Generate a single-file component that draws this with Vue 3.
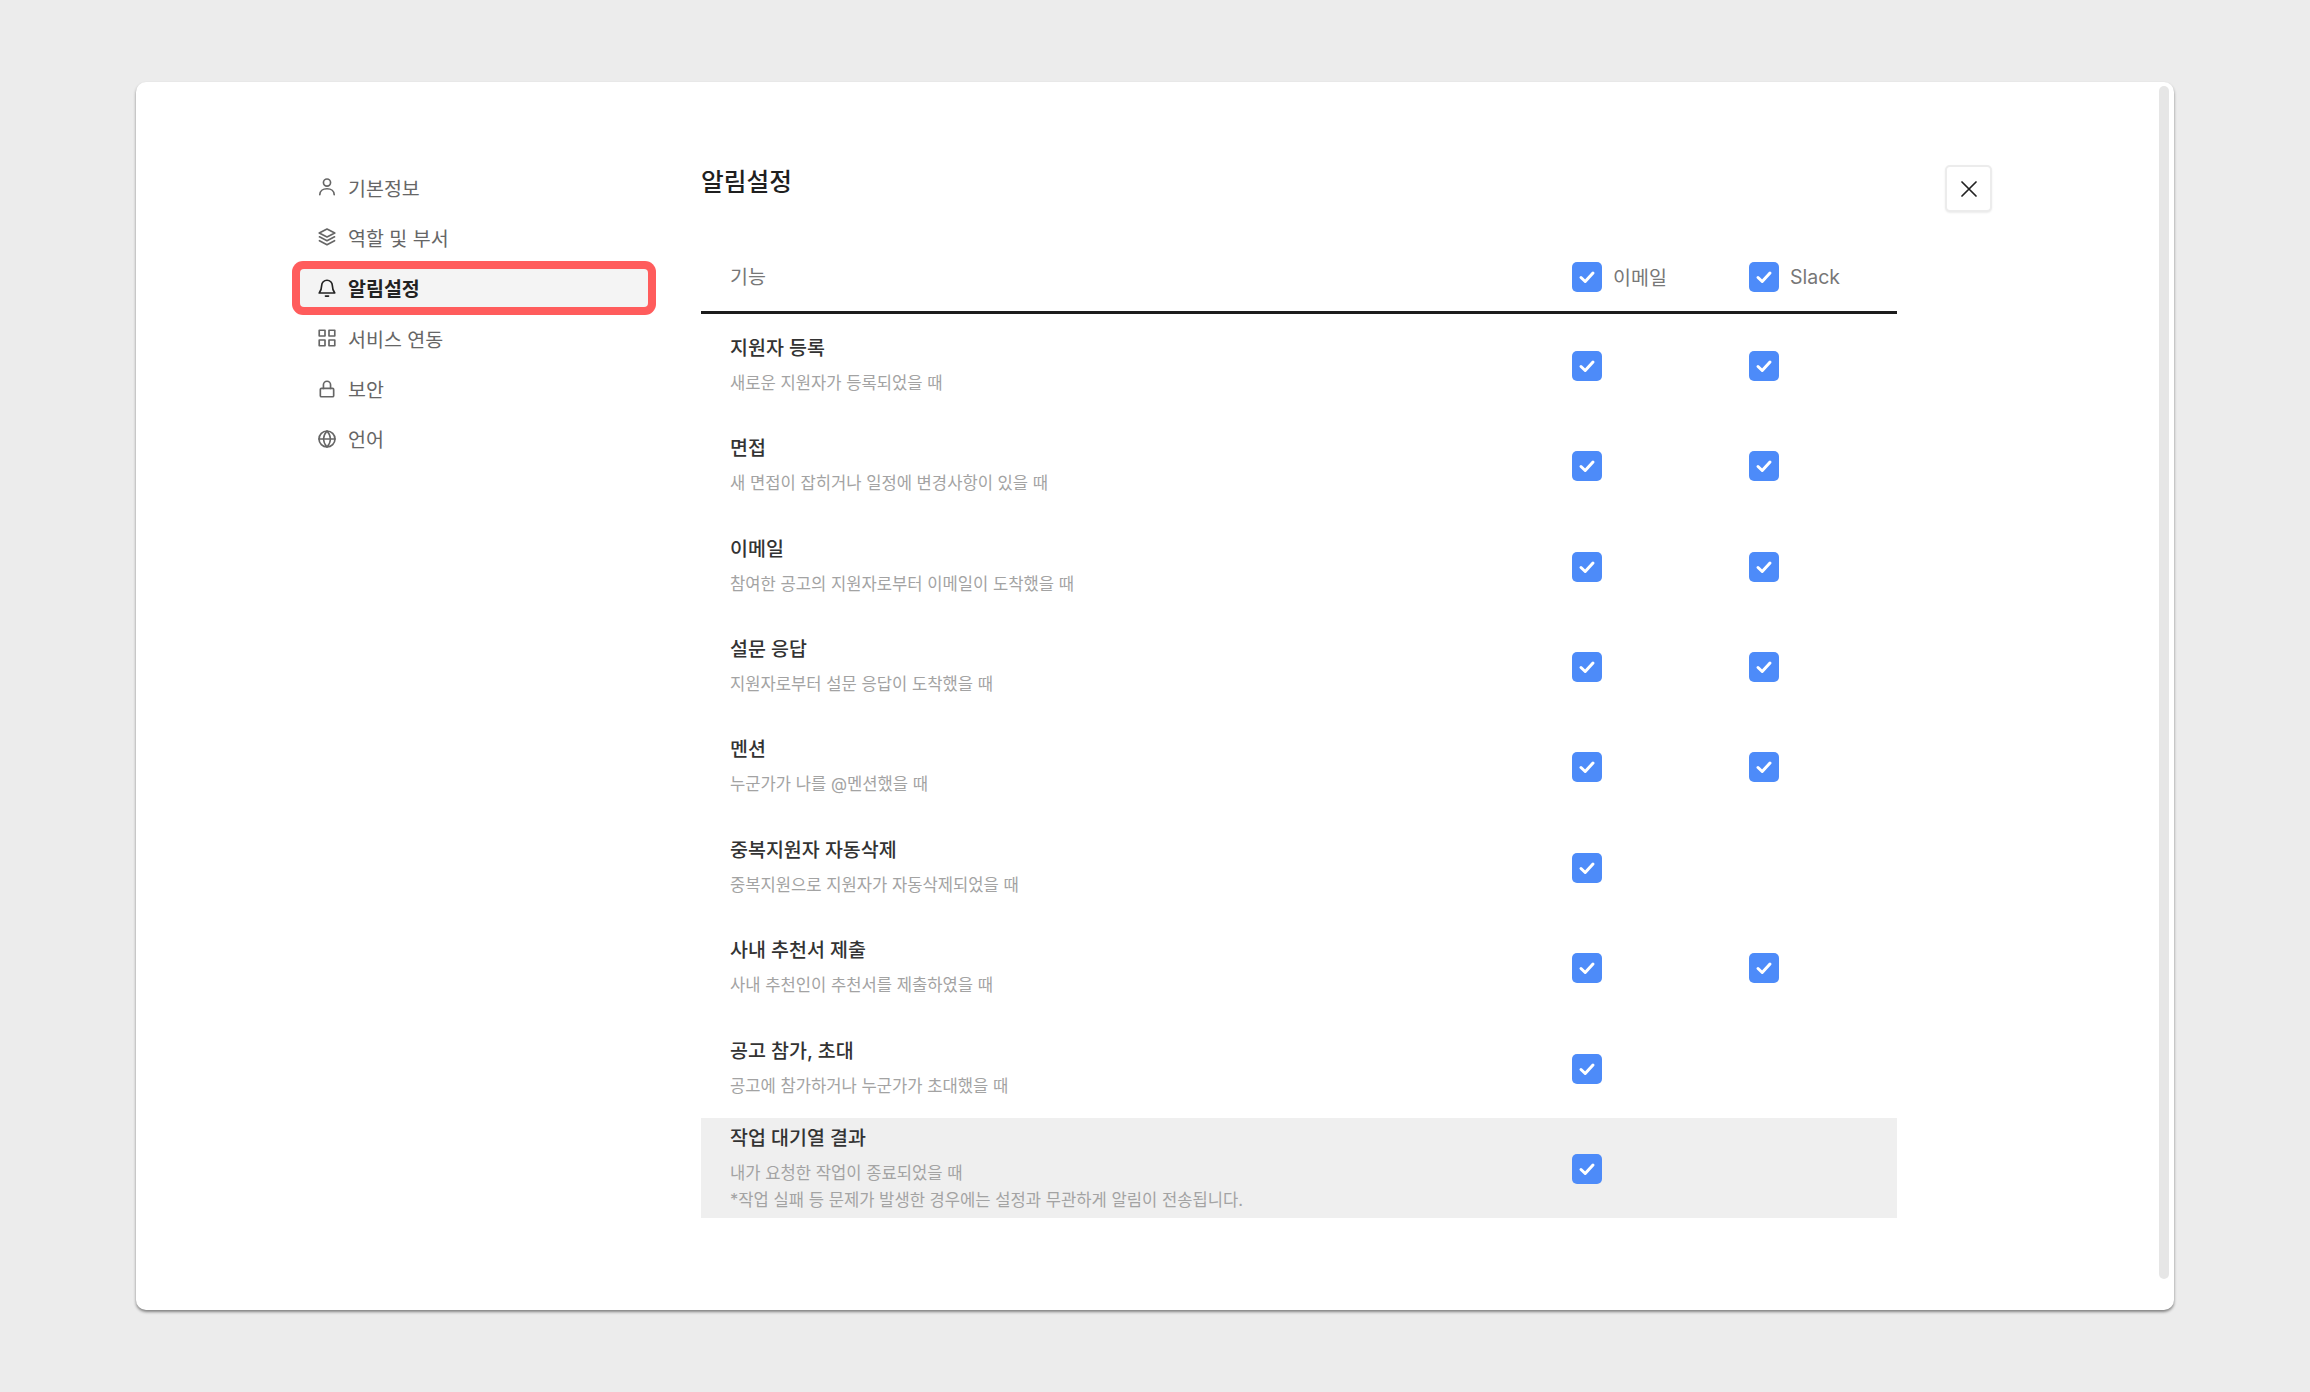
<template>
  <div class="page">
    <div class="card">
      <nav class="side">
        <a v-for="item in menu" :key="item.label" class="side-item" :class="{ active: item.active }">
          <svg class="side-icon" viewBox="0 0 18 18" fill="none" stroke="currentColor" stroke-width="1.5" stroke-linecap="round" stroke-linejoin="round">
            <path v-for="d in item.paths" :key="d" :d="d" />
          </svg>
          <span>{{ item.label }}</span>
        </a>
      </nav>

      <main class="content">
        <h1 class="title">알림설정</h1>
        <div class="table">
          <div class="row head">
            <div class="head-name">기능</div>
            <label class="check-label">
              <span class="check"><svg viewBox="0 0 30 30"><path d="M9 15.500l4.200 4L21 11" /></svg></span>
              이메일
            </label>
            <label class="check-label">
              <span class="check"><svg viewBox="0 0 30 30"><path d="M9 15.500l4.200 4L21 11" /></svg></span>
              Slack
            </label>
          </div>
          <div v-for="row in rows" :key="row.name" class="row body-row" :class="{ shaded: row.shaded }">
            <div class="info">
              <div class="name">{{ row.name }}</div>
              <div v-for="line in row.desc" :key="line" class="desc">{{ line }}</div>
            </div>
            <div class="cell">
              <span class="check"><svg viewBox="0 0 30 30"><path d="M9 15.500l4.200 4L21 11" /></svg></span>
            </div>
            <div class="cell">
              <span v-if="row.slack" class="check"><svg viewBox="0 0 30 30"><path d="M9 15.500l4.200 4L21 11" /></svg></span>
            </div>
          </div>
        </div>
      </main>

      <button class="close" aria-label="닫기">
        <svg viewBox="0 0 16 16" fill="none" stroke="#222" stroke-width="1.700" stroke-linecap="round">
          <path d="M1 1l14 14M15 1L1 15" />
        </svg>
      </button>

      <div class="scrollbar"></div>
    </div>
  </div>
</template>

<script setup>
const menu = [
  { label: '기본정보', paths: ['M9 1.800a3.200 3.200 0 1 1 0 6.400a3.200 3.200 0 1 1 0-6.400z', 'M2.500 16c0-3.400 2.800-5.400 6.500-5.400s6.500 2 6.500 5.400'] },
  { label: '역할 및 부서', paths: ['M9 1.800l7 3.600l-7 3.600l-7-3.600z', 'M2.200 8.800l6.800 3.500l6.800-3.500', 'M2.200 12.300l6.800 3.700l6.800-3.700'] },
  { label: '알림설정', active: true, paths: ['M9 2a4.800 4.800 0 0 0-4.800 4.800c0 3.500-1 5-2.200 6.700h14c-1.200-1.700-2.200-3.200-2.200-6.700A4.800 4.800 0 0 0 9 2z', 'M7.600 16.300h2.800'] },
  { label: '서비스 연동', paths: ['M2 2h5.200v5.200H2z', 'M10.800 2H16v5.200h-5.200z', 'M2 10.800h5.200V16H2z', 'M10.800 10.800H16V16h-5.200z'] },
  { label: '보안', paths: ['M4 8.500h10a1 1 0 0 1 1 1V15a1 1 0 0 1-1 1H4a1 1 0 0 1-1-1V9.500a1 1 0 0 1 1-1z', 'M5.800 8.500V5.200a3.200 3.200 0 0 1 6.400 0v3.300'] },
  { label: '언어', paths: ['M9 1.800a7.200 7.200 0 1 1 0 14.400a7.200 7.200 0 1 1 0-14.400z', 'M1.800 9h14.400', 'M9 1.800c-4 4.500-4 9.900 0 14.400c4-4.500 4-9.900 0-14.400z'] }
]

const rows = [
  { name: '지원자 등록', desc: ['새로운 지원자가 등록되었을 때'], slack: true },
  { name: '면접', desc: ['새 면접이 잡히거나 일정에 변경사항이 있을 때'], slack: true },
  { name: '이메일', desc: ['참여한 공고의 지원자로부터 이메일이 도착했을 때'], slack: true },
  { name: '설문 응답', desc: ['지원자로부터 설문 응답이 도착했을 때'], slack: true },
  { name: '멘션', desc: ['누군가가 나를 @멘션했을 때'], slack: true },
  { name: '중복지원자 자동삭제', desc: ['중복지원으로 지원자가 자동삭제되었을 때'] },
  { name: '사내 추천서 제출', desc: ['사내 추천인이 추천서를 제출하였을 때'], slack: true },
  { name: '공고 참가, 초대', desc: ['공고에 참가하거나 누군가가 초대했을 때'] },
  {
    name: '작업 대기열 결과',
    desc: ['내가 요청한 작업이 종료되었을 때', '*작업 실패 등 문제가 발생한 경우에는 설정과 무관하게 알림이 전송됩니다.'],
    shaded: true
  }
]
</script>

<style>
html, body { margin: 0; background: #ececec; }
</style>

<style scoped>
.page {
  width: 2310px;
  height: 1392px;
  padding: 82px 0 0 136px;
  box-sizing: border-box;
  font-family: Inter, "Noto Sans CJK KR", sans-serif;
  overflow: hidden;
}

.card {
  position: relative;
  display: flex;
  align-items: flex-start;
  width: 2038px;
  height: 1228px;
  padding: 82px 0 0 164px;
  box-sizing: border-box;
  background: #fff;
  border-radius: 10px;
  box-shadow: 0 2px 3px rgba(0, 0, 0, 0.45);
}

.side { width: 348px; padding-top: 4px; flex: none; }
.side-item {
  display: flex;
  align-items: center;
  gap: 11px;
  height: 38px;
  margin-bottom: 12.4px;
  padding-left: 17px;
  font-size: 19.5px;
  color: #666;
  border-radius: 4px;
}
.side-item.active {
  background: #f4f4f4;
  color: #222;
  font-weight: 700;
  box-shadow: 0 0 0 8px #ff5c5c;
}
.side-icon { width: 20px; height: 20px; flex: none; }

.content { width: 1196px; margin-left: 53px; flex: none; }
.title {
  margin: 0 0 42px;
  font-size: 24.7px;
  line-height: 36px;
  font-weight: 500;
  color: #1f1f1f;
}

.row {
  display: grid;
  grid-template-columns: 871px 177px 1fr;
  align-items: center;
}
.head { height: 72px; box-sizing: border-box; border-bottom: 3px solid #1c1c1c; }
.head-name { padding-left: 29px; font-size: 19.5px; color: #777; margin-top: -3px; }
.check-label { display: flex; align-items: center; gap: 11px; font-size: 19.5px; color: #777; }

.body-row { height: 100.44px; }
.shaded { background: #efefef; }
.info { padding: 2px 0 0 29px; }
.name { font-size: 19.5px; line-height: 28px; font-weight: 500; color: #333; margin-bottom: 8px; }
.desc { font-size: 16.6px; line-height: 27px; color: #a3a3a3; }
.cell { display: flex; margin-top: 3px; }

.check {
  display: block;
  width: 30px;
  height: 30px;
  border-radius: 5px;
  background: #4d8bf9;
  flex: none;
}
.check svg { display: block; width: 30px; height: 30px; }
.check path { fill: none; stroke: #fff; stroke-width: 3; stroke-linecap: round; stroke-linejoin: round; }

.close {
  display: flex;
  align-items: center;
  justify-content: center;
  width: 47px;
  height: 47px;
  margin: 1px 0 0 48px;
  padding: 0;
  flex: none;
  background: #fff;
  border: 2px solid #ececec;
  border-radius: 5px;
  box-shadow: 0 1px 2px rgba(0, 0, 0, 0.08);
}
.close svg { width: 16px; height: 16px; }

.scrollbar {
  position: absolute;
  top: 4px;
  right: 5px;
  width: 10px;
  height: 1193px;
  border-radius: 5px;
  background: #e6e6e6;
}
</style>
